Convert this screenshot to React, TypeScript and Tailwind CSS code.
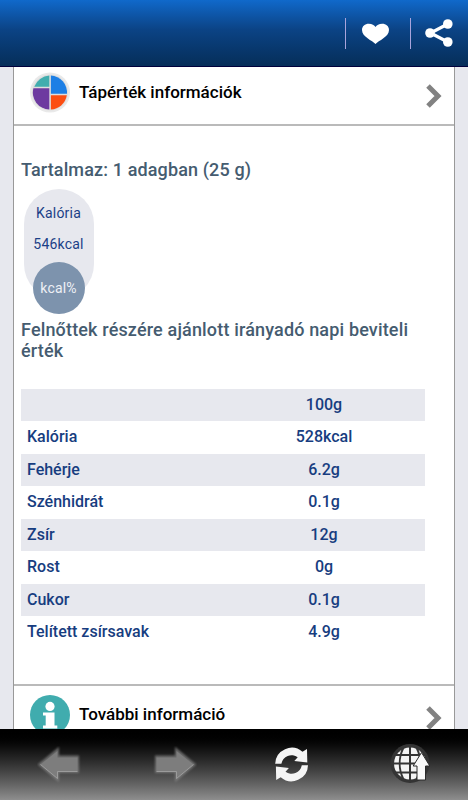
import React from 'react'

const rows = [
  { name: '', value: '100g' },
  { name: 'Kalória', value: '528kcal' },
  { name: 'Fehérje', value: '6.2g' },
  { name: 'Szénhidrát', value: '0.1g' },
  { name: 'Zsír', value: '12g' },
  { name: 'Rost', value: '0g' },
  { name: 'Cukor', value: '0.1g' },
  { name: 'Telített zsírsavak', value: '4.9g' },
]

const Chevron = () => (
  <svg className="mt-4 ml-auto mr-3 shrink-0" width="16" height="26" viewBox="0 0 16 26">
    <path d="M2 3L12 13L2 23" fill="none" stroke="#828282" strokeWidth="5" />
  </svg>
)

const PieIcon = () => (
  <svg className="mt-[5px] shrink-0" width="40" height="41" viewBox="0 0 40 41">
    <circle cx="20" cy="20.5" r="20" fill="#e9e9e9" />
    <circle cx="20" cy="20.5" r="18" fill="#dedede" />
    <path d="M19.3 3.6V14.8H4.2A17 17 0 0 1 19.3 3.6Z" fill="#41adae" />
    <path d="M20.9 3.6A17 17 0 0 1 37 21.8H20.9Z" fill="#1d7fe5" />
    <path d="M3.4 16.2H19.3V37.5A17 17 0 0 1 3.4 16.2Z" fill="#6d3aa0" />
    <path d="M20.9 23.2H36.8A17 17 0 0 1 20.9 37.5Z" fill="#fc4e12" />
  </svg>
)

const InfoIcon = () => (
  <svg className="mt-[9px] shrink-0" width="40" height="40" viewBox="0 0 40 40">
    <circle cx="20" cy="20" r="20" fill="#40acae" />
    <circle cx="20" cy="11.4" r="4.6" fill="#fff" />
    <path d="M13 17.6H24.5V30.5H27.3V33.5H13V30.5H15.7V20.6H13Z" fill="#fff" />
  </svg>
)

const Header = () => (
  <header className="flex h-[67px] shrink-0 items-center justify-end border-b border-[#00003c] bg-linear-to-b from-[#1069cb] from-0% via-[#0b4385] via-45% to-[#062e59]">
    <div className="h-[31px] w-px bg-[#a9a4dc]" />
    <svg className="mt-px ml-4" width="27" height="22" viewBox="0 0 27 22">
      <path d="M13.5 21C10.5 17.5 0 14 0 7C0 3.3 3 .8 6.8 .8C10 .8 12.4 2.2 13.5 4C14.6 2.2 17 .8 20.2 .8C24 .8 27 3.3 27 7C27 14 16.5 17.5 13.5 21Z" fill="#fff" />
    </svg>
    <div className="ml-[21px] h-[31px] w-px bg-[#a9a4dc]" />
    <svg className="mr-[15px] ml-[14px]" width="28" height="28" viewBox="0 0 28 28">
      <path d="M22.8 5L5.5 14L22.8 23" fill="none" stroke="#fff" strokeWidth="3.2" />
      <circle cx="22.8" cy="5" r="4.8" fill="#fff" />
      <circle cx="5" cy="14" r="4.8" fill="#fff" />
      <circle cx="22.8" cy="23" r="4.8" fill="#fff" />
    </svg>
  </header>
)

const Arrow = ({ className }: { className: string }) => (
  <svg className={className} width="44" height="38" viewBox="0 0 44 38">
    <path d="M2.3 18.5L21 3V10.5H41V26H21V34Z" className="blur-[1px]" fill="#888" stroke="#888" strokeWidth="2" opacity=".7" />
    <path d="M3.5 18.5L20.5 5V11.5H40.5V25.5H20.5V32.5Z" fill="#7d7d7d" />
    <path d="M3.5 18.5L20.5 32.5V25.5H40.5" fill="none" stroke="#a4a4a4" strokeWidth=".8" />
  </svg>
)

const Footer = () => (
  <footer className="flex h-[71px] shrink-0 items-start bg-linear-to-b from-black to-[#8e8e8e]">
    <Arrow className="mt-[17px] ml-[37px]" />
    <Arrow className="mt-[17px] ml-[72px] -scale-x-100" />
    <svg className="mt-[18px] ml-[77px]" width="36" height="36" viewBox="0 0 36 36">
      <path d="M1.2 16.8A16.5 16.5 0 0 1 28.5 4.8L33 2L33.3 15.6L20.3 13.9L23.7 10.2A10.3 10.3 0 0 0 7.4 16.8Z" fill="#f5f5f5" />
      <path d="M1.2 16.8A16.5 16.5 0 0 1 28.5 4.8L33 2L33.3 15.6L20.3 13.9L23.7 10.2A10.3 10.3 0 0 0 7.4 16.8Z" fill="#f5f5f5" transform="rotate(180 17.6 17.5)" />
    </svg>
    <svg className="mt-[14px] ml-[80px]" width="42" height="42" viewBox="0 0 42 42">
      <circle cx="20" cy="20.5" r="19.5" fill="#343434" />
      <circle cx="20" cy="20.5" r="16" fill="#f4f4f4" />
      <path d="M20 4V37M3 20.5H37M5 12H35M5 29.5H35M13.5 4.5C8.5 14.5 8.5 26.5 13.5 36.5M26.5 4.5C31.5 14.5 31.5 26.5 26.5 36.5" fill="none" stroke="#343434" strokeWidth="2" />
      <path d="M31.5 9.5L39.8 23H35.5V37H27V23H23.2Z" fill="#fafafa" stroke="#2b2b2b" strokeWidth="1" />
    </svg>
  </footer>
)

const App = () => {
  return (
    <div className="flex h-[800px] w-[468px] flex-col overflow-hidden bg-[#e7e8ee] font-[Roboto,sans-serif]">
      <Header />
      <main className="mr-[13px] ml-[13px] flex h-[662px] flex-col overflow-hidden border-x border-[#999] bg-white">
        <div className="flex h-[59px] shrink-0 items-start border-b-2 border-[#bababa] pl-4">
          <PieIcon />
          <h2 className="mt-[15px] ml-[9px] text-[17px] leading-5 font-medium whitespace-nowrap text-black">Tápérték információk</h2>
          <Chevron />
        </div>

        <section className="flex h-[558px] shrink-0 flex-col pr-7 pl-[7px]">
          <h3 className="mt-[33px] text-[18px] leading-[21px] font-medium tracking-[0.13px] text-[#455c70]">Tartalmaz: 1 adagban (25 g)</h3>
          <div className="mt-[9px] ml-[2.5px] flex h-[125px] w-[70px] flex-col items-center">
            <div className="flex h-[110px] w-[70px] shrink-0 flex-col items-center rounded-[35px] bg-[#e7e8ee] pt-[15px] text-[14px] leading-[18px] tracking-[0.2px] text-[#1b3f87]">
              <span>Kalória</span>
              <span className="mt-[13px]">546kcal</span>
            </div>
            <div className="-mt-[37px] flex h-[52px] w-[52px] shrink-0 items-center justify-center rounded-full bg-[#7d93ad] pb-px text-[14px] leading-[18px] tracking-[0.2px] text-[#eef0f5]">kcal%</div>
          </div>
          <h3 className="mt-[5px] text-[18px] leading-[21px] font-medium tracking-[0.16px] text-[#455c70]">Felnőttek részére ajánlott irányadó napi beviteli érték</h3>
          <div className="mt-[28px] flex w-[404px] flex-col">
            {rows.map((row) => (
              <div key={row.value + row.name} className="mb-[0.5px] flex h-8 items-center pb-px text-[16px] leading-5 font-medium text-[#173d80] odd:bg-[#e7e8ee]">
                <span className="w-[202px] pl-[6px]">{row.name}</span>
                <span className="w-[202px] text-center">{row.value}</span>
              </div>
            ))}
          </div>
        </section>

        <div className="flex h-[59px] shrink-0 items-start border-t-2 border-[#bababa] pl-4">
          <InfoIcon />
          <h2 className="mt-[18px] ml-[9px] text-[17px] leading-5 font-medium whitespace-nowrap text-black">További információ</h2>
          <div className="mt-[3px] ml-auto">
            <Chevron />
          </div>
        </div>
      </main>
      <Footer />
    </div>
  )
}

export default App
